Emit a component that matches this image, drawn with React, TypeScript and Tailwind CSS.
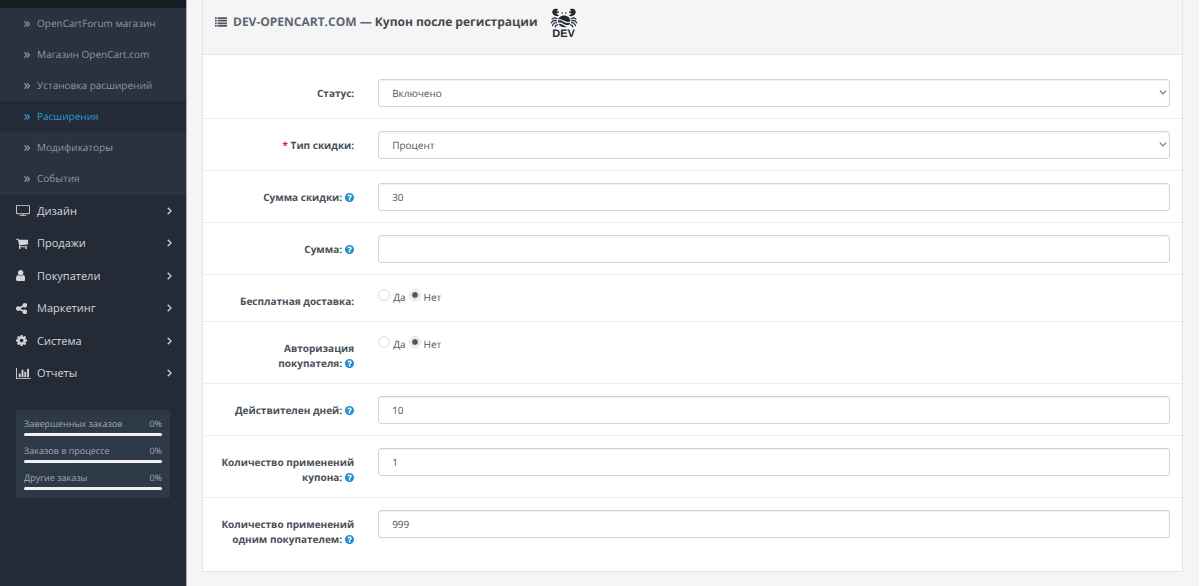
import React from 'react';

type IconProps = { viewBox: string; d: string; className?: string };

function Icon({ viewBox, d, className = 'h-[13px]' }: IconProps) {
  return (
    <svg viewBox={viewBox} className={className} fill="currentColor" aria-hidden="true">
      <path d={d} />
    </svg>
  );
}

const icons = {
  screen: {
    viewBox: '0 0 1920 1792',
    d: 'M1792 1248v-960q0-13-9.5-22.5t-22.5-9.5h-1600q-13 0-22.5 9.5t-9.5 22.5v960q0 13 9.5 22.5t22.5 9.5h1600q13 0 22.5-9.5t9.5-22.5zM1920 288v960q0 66-47 113t-113 47h-736v128h352q14 0 23 9t9 23v64q0 14-9 23t-23 9h-832q-14 0-23-9t-9-23v-64q0-14 9-23t23-9h352v-128h-736q-66 0-113-47t-47-113v-960q0-66 47-113t113-47h1600q66 0 113 47t47 113z',
  },
  cart: {
    viewBox: '64 0 1664 1792',
    d: 'M704 1536q0 52-38 90t-90 38-90-38-38-90 38-90 90-38 90 38 38 90zm896 0q0 52-38 90t-90 38-90-38-38-90 38-90 90-38 90 38 38 90zm128-1088v512q0 24-16.5 42.5t-40.5 21.5l-1044 122q13 60 13 70 0 16-24 64h920q26 0 45 19t19 45-19 45-45 19h-1024q-26 0-45-19t-19-45q0-11 8-31.5t16-36 21.5-40 15.5-29.5l-177-823h-204q-26 0-45-19t-19-45 19-45 45-19h256q16 0 28.5 6.5t19.5 15.5 13 24.5 8 26 5.5 29.5 4.5 26h1201q26 0 45 19t19 45z',
  },
  user: {
    viewBox: '256 0 1280 1792',
    d: 'M1536 1399q0 109-62.5 187t-150.5 78h-854q-88 0-150.5-78t-62.5-187q0-85 8.5-160.5t31.5-152 58.5-131 94-89 134.5-34.5q131 128 313 128t313-128q76 0 134.5 34.5t94 89 58.5 131 31.5 152 8.5 160.5zm-256-887q0 159-112.5 271.5t-271.5 112.5-271.5-112.5-112.5-271.5 112.5-271.5 271.5-112.5 271.5 112.5 112.5 271.5z',
  },
  share: {
    viewBox: '192 0 1536 1792',
    d: 'M1408 1024q133 0 226.5 93.5t93.5 226.5-93.5 226.5-226.5 93.5-226.5-93.5-93.5-226.5q0-12 2-34l-360-180q-92 86-218 86-133 0-226.5-93.5t-93.5-226.5 93.5-226.5 226.5-93.5q126 0 218 86l360-180q-2-22-2-34 0-133 93.5-226.5t226.5-93.5 226.5 93.5 93.5 226.5-93.5 226.5-226.5 93.5q-126 0-218-86l-360 180q2 22 2 34t-2 34l360 180q92-86 218-86z',
  },
  cog: {
    viewBox: '128 0 1536 1792',
    d: 'M1152 896q0-106-75-181t-181-75-181 75-75 181 75 181 181 75 181-75 75-181zm512-109v222q0 12-8 23t-20 13l-185 28q-19 54-39 91 35 50 107 138 10 12 10 25t-9 23q-27 37-99 108t-94 71q-12 0-26-9l-138-108q-44 23-91 38-16 136-29 186-7 28-36 28h-222q-14 0-24.5-8.5t-11.5-21.5l-28-184q-49-16-90-37l-141 107q-10 9-25 9-14 0-25-11-126-114-165-168-7-10-7-23 0-12 8-23 15-21 51-66.5t54-70.5q-27-50-41-99l-183-27q-13-2-21-12.5t-8-23.5v-222q0-12 8-23t19-13l186-28q14-46 39-92-40-57-107-138-10-12-10-24 0-10 9-23 26-36 98.5-107.5t94.5-71.5q13 0 26 10l138 107q44-23 91-38 16-136 29-186 7-28 36-28h222q14 0 24.5 8.5t11.5 21.5l28 184q49 16 90 37l142-107q9-9 24-9 13 0 25 10 129 119 165 170 7 8 7 22 0 12-8 23-15 21-51 66.5t-54 70.5q26 50 41 98l183 28q13 2 21 12.5t8 23.5z',
  },
  chart: {
    viewBox: '0 0 2048 1792',
    d: 'M640 896v512h-256v-512h256zm384-512v1024h-256v-1024h256zm1024 1152v128h-2048v-1536h128v1408h1920zm-640-896v768h-256v-768h256zm384-384v1152h-256v-1152h256z',
  },
  list: {
    viewBox: '0 0 1792 1792',
    d: 'M0 192h256v256h-256zM384 192h1408v256h-1408zM0 576h256v256h-256zM384 576h1408v256h-1408zM0 960h256v256h-256zM384 960h1408v256h-1408zM0 1344h256v256h-256zM384 1344h1408v256h-1408z',
  },
  question: {
    viewBox: '128 128 1536 1536',
    d: 'M1024 1376v-192q0-14-9-23t-23-9h-192q-14 0-23 9t-9 23v192q0 14 9 23t23 9h192q14 0 23-9t9-23zm256-672q0-88-55.5-163t-138.5-116-170-41q-243 0-371 213-15 24 8 42l132 100q7 6 19 6 16 0 25-12 53-68 86-92 34-24 86-24 48 0 85.5 26t37.5 59q0 38-20 61t-68 45q-63 28-115.5 86.5t-52.5 125.5v36q0 14 9 23t23 9h192q14 0 23-9t9-23q0-19 21.5-49.5t54.5-49.5q32-18 49-28.5t46-35 44.5-48 28-60.5 12.5-81zm384 192q0 209-103 385.5t-279.5 279.5-385.5 103-385.5-103-279.5-279.5-103-385.5 103-385.5 279.5-279.5 385.5-103 385.5 103 279.5 279.5 103 385.5z',
  },
};

function CrabLogo() {
  return (
    <span className="ml-3 flex flex-col items-center text-[#1f2833]">
      <svg viewBox="0 0 28 20" className="h-5 w-7 shrink-0" fill="currentColor" aria-hidden="true">
        <path d="M7 0.8C4 0 1.8 2.2 2.3 4.8C2.8 6.9 4.9 8.2 8 8.3L9 7.1C7.2 6.8 6.4 6 6.6 5.1C7.9 5.6 9 4.7 9 3.2L6.4 3.6L8.2 1.6Z" />
        <path d="M21 0.8C24 0 26.2 2.2 25.7 4.8C25.2 6.9 23.1 8.2 20 8.3L19 7.1C20.8 6.8 21.6 6 21.4 5.1C20.1 5.6 19 4.7 19 3.2L21.6 3.6L19.8 1.6Z" />
        <circle cx="12.3" cy="5" r="0.8" />
        <circle cx="15.7" cy="5" r="0.8" />
        <path d="M8 11.6C9 8.6 11.4 7.4 14 7.4C17.6 7.4 20.2 9.8 20.4 13.2C18 14.6 16.2 13.8 14 12.6S10 10.6 8 11.6Z" />
        <path d="M7.8 12.7C10 11.7 11.6 12.5 13.6 13.7S18 15.5 20.2 14.4C20 15.3 19.6 16.1 19 16.8C16.6 17.4 14.6 16.4 12.6 15.2S9.6 14.1 8 14.7Z" />
        <path d="M8.6 15.9C10 15.4 11.4 16.1 13 17.1S15.6 18.5 17 18.3C14.6 19.9 10.6 19.4 8.6 15.9Z" />
        <g fill="none" stroke="currentColor" strokeWidth="1.2" strokeLinecap="round">
          <path d="M6.8 10.6L4.4 9.6L2 11M6.3 12.6L3.4 12.3L1.2 14.8M6.5 14.7L4.2 15L2.4 17.6M7.6 16.8L5.8 17.4L5.2 19" />
          <path d="M21.2 10.6L23.6 9.6L26 11M21.7 12.6L24.6 12.3L26.8 14.8M21.5 14.7L23.8 15L25.6 17.6M20.4 16.8L22.2 17.4L22.8 19" />
        </g>
      </svg>
      <span className="font-['Liberation_Sans',sans-serif] text-[11px] leading-3 font-bold">DEV</span>
    </span>
  );
}

const subMenu = [
  { title: 'OpenCartForum магазин' },
  { title: 'Магазин OpenCart.com' },
  { title: 'Установка расширений' },
  { title: 'Расширения', active: true },
  { title: 'Модификаторы' },
  { title: 'События' },
];

const menu = [
  { icon: icons.screen, title: 'Дизайн' },
  { icon: icons.cart, title: 'Продажи' },
  { icon: icons.user, title: 'Покупатели' },
  { icon: icons.share, title: 'Маркетинг' },
  { icon: icons.cog, title: 'Система' },
  { icon: icons.chart, title: 'Отчеты' },
];

const stats = ['Завершенных заказов', 'Заказов в процессе', 'Другие заказы'];

function Sidebar() {
  return (
    <nav className="w-[186px] shrink-0 bg-[#242b36] shadow-[1px_0_0_#a8abaf]">
      <div className="h-2 bg-[#171b22]" />
      <ul className="bg-[#2a3140] pb-px leading-[15px]">
        {subMenu.map((item) => (
          <li key={item.title}>
            <a
              href="#"
              className={
                item.active
                  ? 'flex h-[31px] items-center bg-[#242b36] pl-6 text-[#2a9bd8]'
                  : 'flex h-[31px] items-center pl-6 text-[#91979d]'
              }
            >
              <svg viewBox="0 0 6 6" className="mr-[7px] h-1.5 w-1.5" fill="none" stroke="currentColor" strokeWidth="1.2" aria-hidden="true">
                <path d="M0.4 0.4L2.9 3L0.4 5.6M3 0.4L5.5 3L3 5.6" />
              </svg>
              {item.title}
            </a>
          </li>
        ))}
      </ul>
      <ul className="grid h-[195px] auto-rows-fr text-[11px] text-[#d2d5d8]">
        {menu.map((item) => (
          <li key={item.title} className="border-b border-[#27323d]">
            <a href="#" className="flex h-full items-center pr-3.5 pl-4">
              <span className="w-[21px]">
                <Icon {...item.icon} />
              </span>
              <span className="grow pt-0.5">{item.title}</span>
              <svg viewBox="0 0 5 8" className="h-2 w-[5px]" fill="none" stroke="currentColor" strokeWidth="1.3" aria-hidden="true">
                <path d="M0.7 0.8L4 4L0.7 7.2" />
              </svg>
            </a>
          </li>
        ))}
      </ul>
      <div className="mx-4 mt-5 flex flex-col gap-[9px] rounded-xs bg-[#2e3948] p-2 text-[9px] leading-3 text-[#a4a9af]">
        {stats.map((title) => (
          <div key={title}>
            <div className="flex justify-between">
              <span>{title}</span>
              <span>0%</span>
            </div>
            <div className="mt-[3px] h-[3px] rounded-xs bg-[#f0f0f0]" />
          </div>
        ))}
      </div>
    </nav>
  );
}

type RowProps = {
  id: string;
  label: string;
  required?: boolean;
  help?: boolean;
  first?: boolean;
  group?: boolean;
  children: React.ReactNode;
};

function Row({ id, label, required, help, first, group, children }: RowProps) {
  const LabelTag = group ? 'span' : 'label';
  const words = label.split(' ');
  return (
    <div className={first ? 'flex border-t border-transparent pt-3 pb-[11px]' : 'flex border-t border-[#ededed] pt-3 pb-[11px]'}>
      <div className="w-1/6 px-3 pt-[7px] pb-px text-right leading-[15px] font-bold text-[#484f59]">
        <LabelTag id={`${id}-label`} {...(group ? {} : { htmlFor: id })}>
          {required && <span className="text-[#e02020]">* </span>}
          {/* the help icon never wraps away from the last word */}
          {words.map((word, i) => (
            <React.Fragment key={i}>
              {i > 0 && ' '}
              <span className="whitespace-nowrap">
                {word}
                {help && i === words.length - 1 && (
                  <Icon {...icons.question} className="ml-[3px] inline h-[9px] w-[9px] align-[-1px] text-[#1e91cf]" />
                )}
              </span>
            </React.Fragment>
          ))}
        </LabelTag>
      </div>
      <div className="w-5/6 px-3">{children}</div>
    </div>
  );
}

function TextField({ id, value = '' }: { id: string; value?: string }) {
  return (
    <input
      id={id}
      type="text"
      defaultValue={value}
      className="block h-7 w-full rounded-[3px] border border-[#d2d2d2] bg-white px-[13px] shadow-[inset_0_1px_1px_rgba(0,0,0,0.06)] [text-rendering:inherit]"
    />
  );
}

function SelectField({ id, options }: { id: string; options: string[] }) {
  return (
    <div className="relative">
      <select
        id={id}
        className="block h-7 w-full appearance-none rounded-[3px] border border-[#d2d2d2] bg-white px-[13px] pt-px shadow-[inset_0_1px_1px_rgba(0,0,0,0.06)] [text-rendering:inherit]"
      >
        {options.map((option) => (
          <option key={option}>{option}</option>
        ))}
      </select>
      <svg viewBox="0 0 8 5" className="pointer-events-none absolute top-[11px] right-[3px] h-[5px] w-2" fill="none" stroke="#6b7580" strokeWidth="1.1" aria-hidden="true">
        <path d="M0.8 0.7L4 4L7.2 0.7" />
      </svg>
    </div>
  );
}

function YesNo({ id }: { id: string }) {
  return (
    <div role="radiogroup" aria-labelledby={`${id}-label`} className="flex gap-[3px] pt-0.5 leading-4">
      {['Да', 'Нет'].map((text) => (
        <label key={text} className="flex items-start gap-[3px]">
          <input
            type="radio"
            name={id}
            defaultChecked={text === 'Нет'}
            className="h-3 w-3 appearance-none rounded-full border border-[#dcdcdc] bg-white checked:bg-[radial-gradient(circle,#4a5663_2px,#fff_4px)]"
          />
          {text}
        </label>
      ))}
    </div>
  );
}

export default function App() {
  return (
    <div className="flex min-h-screen bg-[#f5f5f5] font-['Open_Sans',sans-serif] text-[10px] text-[#4f5660] [text-rendering:geometricPrecision]">
      <Sidebar />
      <main className="min-w-0 grow border-r border-white pr-4 pb-4 pl-4">
        <div className="border border-t-0 border-[#e4e4e4] bg-white">
          <div className="flex items-start border-b border-[#e4e4e4] bg-[#f5f5f5] px-3 pt-2 pb-3.5">
            <h3 className="flex h-[27px] items-center text-xs font-bold text-[#45494f]">
              <Icon {...icons.list} className="mr-1.5 h-3 w-3 text-[#4c5560]" />
              <span className="whitespace-pre text-[#5c6773]">DEV-OPENCART.COM — </span>
              Купон после регистрации
            </h3>
            <CrabLogo />
          </div>
          <form className="pt-[11px] pb-3">
            <Row id="status" label="Статус:" first>
              <SelectField id="status" options={['Включено', 'Отключено']} />
            </Row>
            <Row id="type" label="Тип скидки:" required>
              <SelectField id="type" options={['Процент', 'Фиксированная сумма']} />
            </Row>
            <Row id="discount" label="Сумма скидки:" help>
              <TextField id="discount" value="30" />
            </Row>
            <Row id="total" label="Сумма:" help>
              <TextField id="total" />
            </Row>
            <Row id="shipping" label="Бесплатная доставка:" group>
              <YesNo id="shipping" />
            </Row>
            <Row id="logged" label="Авторизация покупателя:" help group>
              <YesNo id="logged" />
            </Row>
            <Row id="days" label="Действителен дней:" help>
              <TextField id="days" value="10" />
            </Row>
            <Row id="uses-total" label="Количество применений купона:" help>
              <TextField id="uses-total" value="1" />
            </Row>
            <Row id="uses-customer" label="Количество применений одним покупателем:" help>
              <TextField id="uses-customer" value="999" />
            </Row>
          </form>
        </div>
      </main>
    </div>
  );
}
